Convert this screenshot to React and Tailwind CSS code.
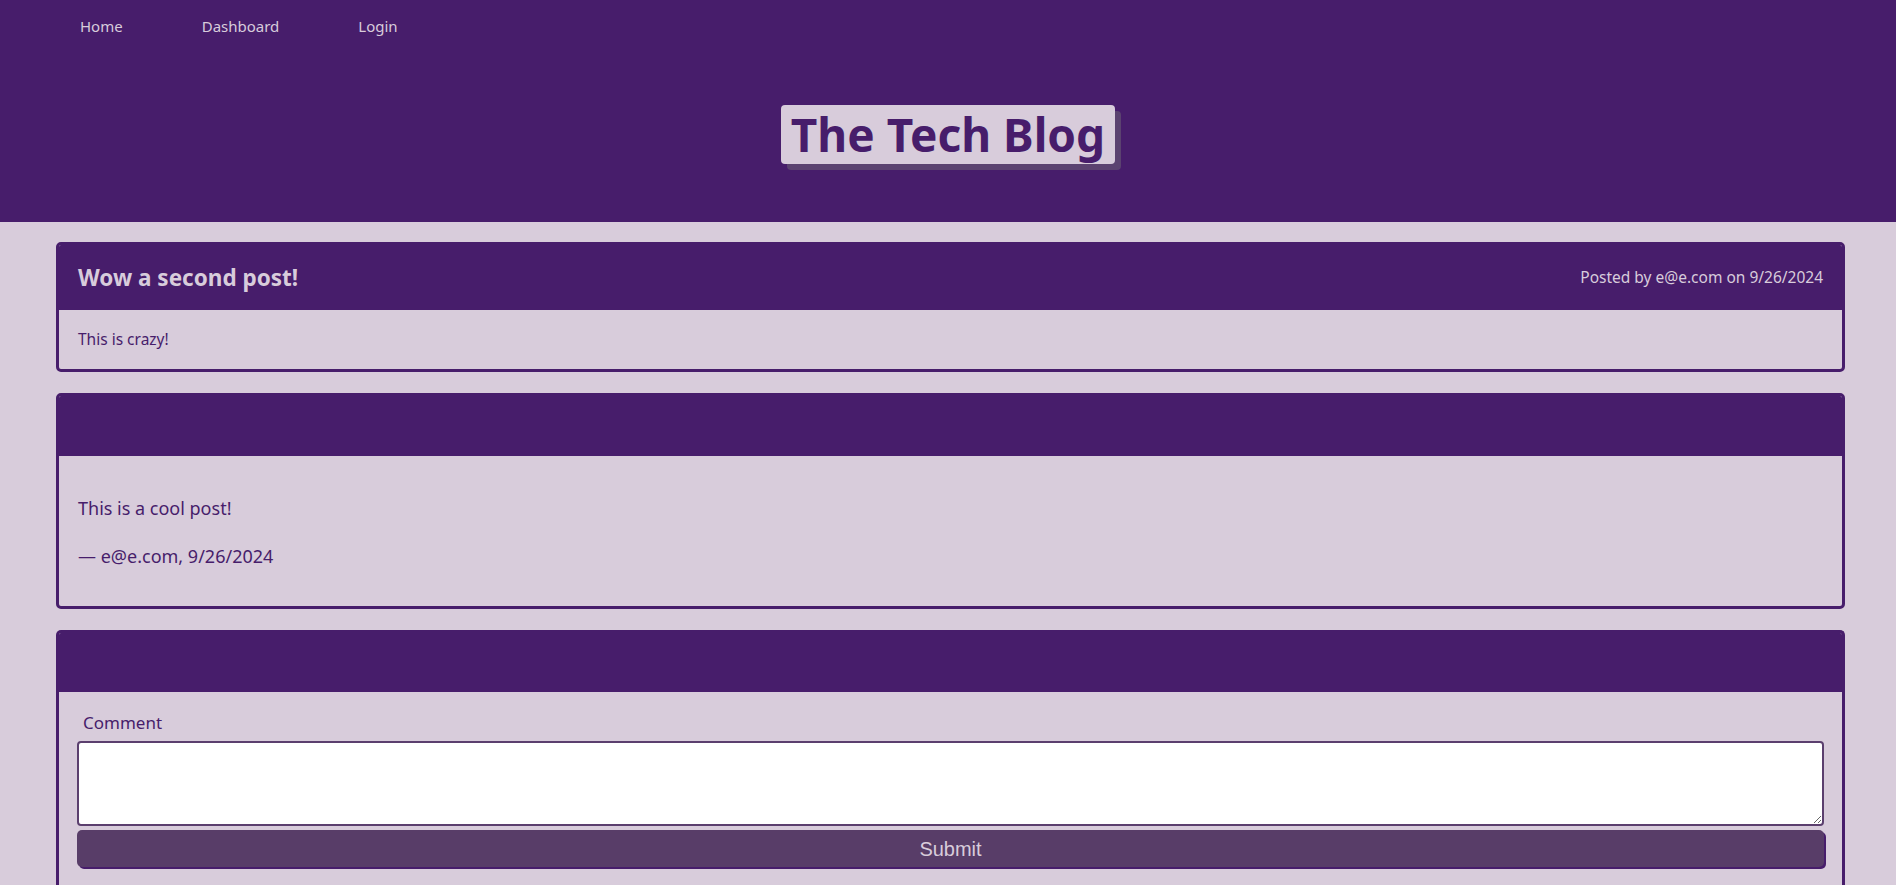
const FONT = "font-['Noto_Sans','Open_Sans',sans-serif]";

function NavBar() {
  return (
    <nav className="flex h-[52px] items-center gap-[79px] pl-[80px] text-[15px] text-[#d8ccdb]">
      <a href="#">Home</a>
      <a href="#">Dashboard</a>
      <a href="#">Login</a>
    </nav>
  );
}

function Card({ header, children, className = "" }) {
  return (
    <section
      className={`overflow-hidden rounded-[5px] border-[3px] border-[#471d6b] ${className}`}
    >
      <div className="bg-[#471d6b]">{header}</div>
      {children}
    </section>
  );
}

export default function App() {
  return (
    <div className={`min-h-[885px] overflow-hidden bg-[#d8ccdb] ${FONT}`}>
      <header className="h-[222px] bg-[#471d6b]">
        <NavBar />
        <div className="flex justify-center pt-[53px]">
          <h1 className="rounded-[4px] bg-[#d8ccdb] px-[10px] text-[46px] font-bold leading-[59px] text-[#471d6b] shadow-[6px_6px_0_#5b4270]">
            The Tech Blog
          </h1>
        </div>
      </header>

      <main className="ml-[56px] mr-[51px] flex flex-col gap-[21px] pt-[20px]">
        <Card
          header={
            <div className="flex h-[65px] items-center justify-between pl-[19px] pr-[19px]">
              <h2 className="text-[22.5px] font-bold text-[#d8ccdb]">
                Wow a second post!
              </h2>
              <p className="text-[15.5px] text-[#d8ccdb]">
                Posted by e@e.com on 9/26/2024
              </p>
            </div>
          }
        >
          <div className="flex h-[59px] items-center px-[19px] text-[15.5px] text-[#471d6b]">
            This is crazy!
          </div>
        </Card>

        <Card header={<div className="h-[60px]" />}>
          <div className="px-[19px] pb-[38px] pt-[40px] text-[18px] leading-[24px] text-[#471d6b]">
            <p>This is a cool post!</p>
            <p className="mt-[24px]">— e@e.com, 9/26/2024</p>
          </div>
        </Card>

        <Card header={<div className="h-[59px]" />} className="rounded-b-none border-b-0">
          <form className="px-[18px] pt-[19px] pb-[40px]">
            <label className="block pl-[6px] text-[17px] leading-[24px] text-[#471d6b]">
              Comment
            </label>
            <textarea className="mt-[6px] block h-[85px] w-full rounded-[4px] border-2 border-[#5b3f6e] bg-white" />
            <button
              type="button"
              className="mt-[4px] block h-[37px] w-full rounded-[5px] bg-[#583d68] font-['Liberation_Sans',Arial,sans-serif] text-[20px] text-[#d8ccdb] shadow-[2px_2px_0_#471d6b]"
            >
              Submit
            </button>
          </form>
        </Card>
      </main>
    </div>
  );
}
